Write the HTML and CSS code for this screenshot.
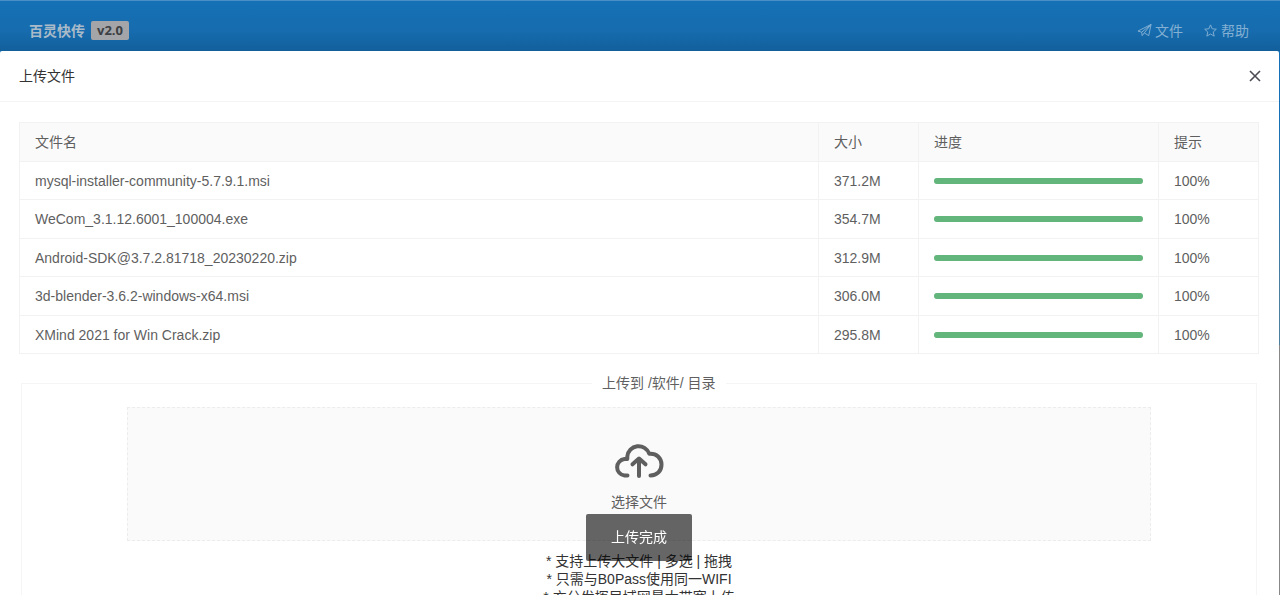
FILE: index.html
```html
<!DOCTYPE html>
<html lang="zh-CN">
<head>
<meta charset="utf-8">
<title>百灵快传</title>
<link rel="stylesheet" href="styles.css">
</head>
<body>
<header class="topbar">
  <div class="brand"><span class="brand-name">百灵快传</span><span class="version">v2.0</span></div>
  <nav class="nav">
    <a href="#files"><svg class="nav-icon" viewBox="0 0 16 16" aria-hidden="true"><path d="M1 8.600 15 1.500 12.500 13.500 7.800 10.500 5.500 13.500 5 9.800ZM5 9.800 15 1.500 7.800 10.500"/></svg>文件</a>
    <a href="#help"><svg class="nav-icon" viewBox="0 0 16 16" aria-hidden="true"><path d="M8 2 9.800 6.200 14.200 6.600 10.900 9.600 11.900 14 8 11.700 4.100 14 5.100 9.600 1.800 6.600 6.200 6.200Z"/></svg>帮助</a>
  </nav>
</header>
<main class="dialog" role="dialog" aria-labelledby="dialog-title">
  <div class="dialog-head">
    <h1 class="dialog-title" id="dialog-title">上传文件</h1>
    <button class="close" type="button" aria-label="关闭"><svg viewBox="0 0 12 12" aria-hidden="true"><path d="M1 1 11 11M11 1 1 11"/></svg></button>
  </div>
  <div class="dialog-body">
    <table class="files">
      <colgroup><col><col class="col-size"><col class="col-progress"><col class="col-tip"></colgroup>
      <thead><tr><th>文件名</th><th>大小</th><th>进度</th><th>提示</th></tr></thead>
      <tbody>
        <tr><td>mysql-installer-community-5.7.9.1.msi</td><td>371.2M</td><td><div class="track"><div class="bar" style="width:100%"></div></div></td><td>100%</td></tr>
        <tr><td>WeCom_3.1.12.6001_100004.exe</td><td>354.7M</td><td><div class="track"><div class="bar" style="width:100%"></div></div></td><td>100%</td></tr>
        <tr><td>Android-SDK@3.7.2.81718_20230220.zip</td><td>312.9M</td><td><div class="track"><div class="bar" style="width:100%"></div></div></td><td>100%</td></tr>
        <tr><td>3d-blender-3.6.2-windows-x64.msi</td><td>306.0M</td><td><div class="track"><div class="bar" style="width:100%"></div></div></td><td>100%</td></tr>
        <tr><td>XMind 2021 for Win Crack.zip</td><td>295.8M</td><td><div class="track"><div class="bar" style="width:100%"></div></div></td><td>100%</td></tr>
      </tbody>
    </table>
    <fieldset class="target">
      <legend>上传到 /软件/ 目录</legend>
      <button class="drop" type="button">
        <svg class="cloud" viewBox="0 0 50 36" aria-hidden="true"><path d="M13.500 32.500H10.500A8.300 8.300 0 0 1 10.500 16H13.300V13.500A11.300 11.300 0 0 1 35.200 10.700C42.500 10 47.500 15 47.500 21.500C47.500 28 43 32.500 36.500 32.500"/><path class="arrow" d="M25 33V16.500M18.500 21.300 25 15.500 31.500 21.300"/></svg>
        <span>选择文件</span>
      </button>
      <div class="notes">
        <p>* 支持上传大文件 | 多选 | 拖拽</p>
        <p>* 只需与B0Pass使用同一WIFI</p>
        <p>* 充分发挥局域网最大带宽上传</p>
      </div>
    </fieldset>
  </div>
</main>
<div class="toast" role="status">上传完成</div>
</body>
</html>
```
FILE: styles.css
```css
* { box-sizing: border-box; }
html { height: 100%; }
body {
  margin: 0;
  height: 100%;
  overflow: hidden;
  display: flex;
  flex-direction: column;
  font: 14px/20px "Liberation Sans", Arial, "Noto Sans CJK SC", sans-serif;
  color: #333;
  background: linear-gradient(#1670b5 0 20%, #4d7f9e 50% 58%, #888 58%);
}
.topbar {
  flex: none;
  height: 51px;
  padding: 9px 31px 0 29px;
  display: flex;
  align-items: center;
  justify-content: space-between;
  border-top: 1px solid #4a8fc6;
  background: linear-gradient(#1671b6 0%, #166cae 60%, #125f9b 100%);
}
.brand { display: flex; align-items: center; gap: 6px; font-weight: bold; color: #a9bac8; }
.version {
  padding: 0 6px;
  border-radius: 2px;
  background: #a3a5a8;
  color: #3c4044;
  font: bold 13px/19px "Open Sans", sans-serif;
}
.nav { display: flex; gap: 20px; }
.nav a { display: flex; align-items: center; gap: 3px; color: #84b0d3; text-decoration: none; }
.nav-icon { width: 15px; height: 15px; fill: none; stroke: currentColor; stroke-linejoin: round; }
.dialog {
  flex: 1;
  min-height: 0;
  margin-right: 1px;
  background: #fff;
  border-radius: 2px 2px 0 0;
  overflow: hidden;
}
.dialog-head {
  height: 51px;
  padding: 0 18px 0 19px;
  display: flex;
  align-items: center;
  justify-content: space-between;
  border-bottom: 1px solid #f4f4f4;
}
.dialog-title { margin: 0; font-size: 14px; font-weight: normal; }
.close { display: flex; padding: 0; border: 0; background: none; }
.close svg { width: 12px; height: 12px; fill: none; stroke: #4c4c54; stroke-width: 1.600; }
.dialog-body { padding: 20px 20px 0 19px; }
.files { width: 100%; table-layout: fixed; border-collapse: collapse; color: #5f5f5f; }
.files th, .files td { padding: 0 15px; height: 38px; border: 1px solid #f2f2f2; text-align: left; font-weight: normal; }
.files th { height: 39px; background: #fafafa; }
.files tr:nth-child(even) td { height: 39px; }
.col-size { width: 100px; }
.col-progress { width: 240px; }
.col-tip { width: 100px; }
.track { height: 6px; border-radius: 3px; background: #e2e2e2; }
.bar { height: 6px; border-radius: 3px; background: #62b67b; }
.target { margin: 19px 2px 0; padding: 14px 0 0; border: 1px solid #f5f5f5; }
.target legend { margin-left: calc(50% - 47px); padding: 0 10px; color: #5f5f5f; }
.drop {
  width: 83%;
  margin: 0 auto;
  padding: 35px 0 28px;
  display: flex;
  flex-direction: column;
  align-items: center;
  gap: 13px;
  border: 1px dashed #ececec;
  background: #fafafa;
  color: #5f5f5f;
  font: inherit;
}
.cloud { width: 50px; height: 36px; fill: none; stroke: #5f5f5f; stroke-width: 4; stroke-linecap: round; stroke-linejoin: round; }
.notes { margin-top: 11px; text-align: center; line-height: 18px; }
.notes p { margin: 0; }
.toast {
  position: fixed;
  left: 0;
  right: 2px;
  bottom: 34px;
  width: fit-content;
  margin: 0 auto;
  padding: 13px 25px 14px;
  border-radius: 2px;
  background: rgba(0, 0, 0, .6);
  color: #fff;
}
```
